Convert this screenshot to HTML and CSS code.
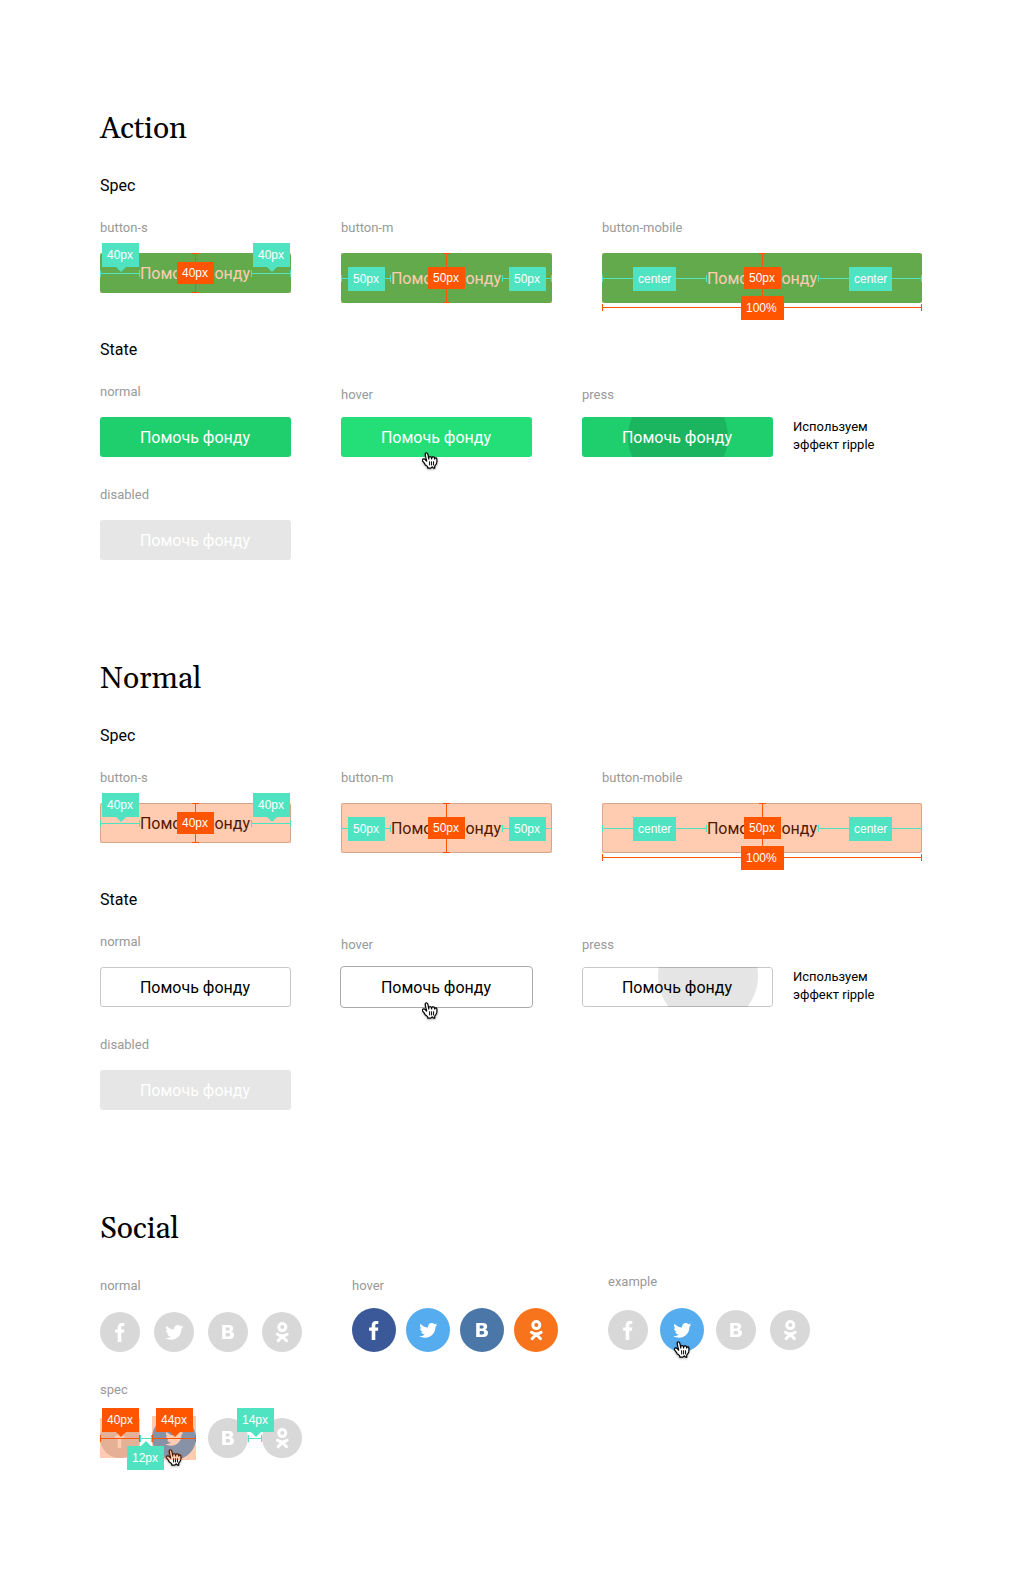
FILE: index.html
```html
<!DOCTYPE html>
<html lang="ru">
<head>
<meta charset="utf-8">
<title>Buttons</title>
<link rel="stylesheet" href="styles.css">
</head>
<body>
<svg class="sprite" aria-hidden="true">
  <symbol id="i-fb" viewBox="0 0 40 40"><path d="M17.7 30v-9.300h-2.600v-3.100h2.600v-2.100c0-2.900 1.600-4.500 4.200-4.500h2.400v3.100h-1.500c-1.200 0-1.500.5-1.500 1.500v2h3l-.35 3.100h-2.650V30z"/></symbol>
  <symbol id="i-tw" viewBox="0 0 40 40"><path transform="translate(11.300 11.350) scale(.75)" d="M23.954 4.569c-.885.389-1.830.654-2.825.775 1.014-.611 1.794-1.574 2.163-2.723-.951.555-2.005.959-3.127 1.184-.896-.959-2.173-1.559-3.591-1.559-2.717 0-4.920 2.203-4.920 4.917 0 .39.045.765.127 1.124C7.691 8.094 4.066 6.130 1.640 3.161c-.427.722-.666 1.561-.666 2.475 0 1.710.87 3.213 2.188 4.096-.807-.026-1.566-.248-2.228-.616v.061c0 2.385 1.693 4.374 3.946 4.827-.413.111-.849.171-1.296.171-.314 0-.615-.03-.916-.086.631 1.953 2.445 3.377 4.604 3.417-1.680 1.319-3.809 2.105-6.102 2.105-.39 0-.779-.023-1.170-.067 2.189 1.394 4.768 2.209 7.557 2.209 9.054 0 13.999-7.496 13.999-13.986 0-.209 0-.42-.015-.63.961-.689 1.800-1.560 2.460-2.548z"/></symbol>
  <symbol id="i-vk" viewBox="0 0 40 40"><path fill-rule="evenodd" d="M14.200 13h6.800c2.800 0 4.200 1.400 4.200 3.500 0 1.500-.8 2.600-2.100 3.100 1.800.3 2.900 1.600 2.900 3.300 0 2.600-1.800 4.100-4.700 4.100h-7.100zM17.700 15.600v3h2.200c1.100 0 1.700-.5 1.700-1.500s-.6-1.500-1.700-1.500zM17.700 21v3.400h2.600c1.300 0 1.900-.6 1.900-1.700s-.7-1.700-2-1.700z"/></symbol>
  <symbol id="i-ok" viewBox="0 0 40 40"><g fill="none" stroke="currentColor" stroke-width="3" stroke-linecap="round"><circle cx="20.300" cy="15.100" r="3.500"/><path d="M15.400 22.300c3 2 6.800 2 9.800 0M20.300 24.200l-4.200 4.500M20.300 24.200l4.200 4.500"/></g></symbol>
  <symbol id="i-hand" viewBox="8 7.500 16 18"><path fill="#fff" stroke="#000" stroke-width="1.200" stroke-linejoin="round" d="M11.300 20.400c-.3-.4-.6-1.100-1.200-2-.3-.5-1.200-1.500-1.500-1.900-.2-.4-.2-.6-.1-1 .1-.6.7-1.100 1.400-1.100.5 0 1 .4 1.400.7.2.2.5.6.7.8.2.2.2.3.4.5.2.3.3.5.2.1-.1-.5-.2-1.300-.4-2.100-.1-.6-.2-.7-.3-1.100-.1-.5-.2-.8-.3-1.300-.1-.3-.2-1.100-.3-1.500-.1-.5-.1-1.400.3-1.800.3-.3.9-.4 1.300-.2.5.3.8 1 .9 1.300.2.5.4 1.200.5 2 .2 1 .5 2.500.5 2.800 0-.4-.1-1.100 0-1.500.1-.3.3-.7.7-.8.3-.1.6-.1.9-.1.3.1.6.3.8.5.4.6.4 1.900.4 1.800.1-.4.1-1.200.3-1.600.1-.2.500-.4.7-.5.3-.1.7-.1 1 0 .2 0 .6.3.7.5.2.3.3 1.300.4 1.700 0 .1.100-.4.3-.7.4-.6 1.800-.8 1.900.6v2.300c0 .4-.1 1.300-.2 1.700-.1.3-.4 1-.7 1.400 0 0-1.100 1.200-1.200 1.800-.1.6-.1.6-.1 1s.1.900.1.900-.8.100-1.200 0c-.4-.1-.9-.8-1-1.100-.2-.3-.5-.3-.7 0-.2.400-.7 1.100-1.100 1.100-.7.1-2.100 0-3.100 0 0 0 .2-1-.2-1.400-.3-.3-.8-.8-1.100-1.100z"/><path stroke="#000" stroke-width="1" stroke-linecap="round" d="M15.600 17.200l.05 3.300M17.600 17.200v3.300M19.600 17.200v3.300"/></symbol>
</svg>

<main class="page">
  <section class="section">
    <h2>Action</h2>
    <h3>Spec</h3>
    <div class="row">
      <div class="cell">
        <p class="label">button-s</p>
        <div class="btn action spec">Помочь фонду
          <i class="ruler left w40"><b class="tag up point">40px</b></i>
          <i class="ruler right w40"><b class="tag up point">40px</b></i>
          <i class="ruler vertical"><b class="tag">40px</b></i>
        </div>
      </div>
      <div class="cell">
        <p class="label">button-m</p>
        <div class="btn medium action spec">Помочь фонду
          <i class="ruler left w50"><b class="tag">50px</b></i>
          <i class="ruler right w50"><b class="tag">50px</b></i>
          <i class="ruler vertical"><b class="tag">50px</b></i>
        </div>
      </div>
      <div class="cell">
        <p class="label">button-mobile</p>
        <div class="btn mobile action spec">Помочь фонду
          <i class="ruler left w105"><b class="tag wide">center</b></i>
          <i class="ruler right w104"><b class="tag wide">center</b></i>
          <i class="ruler vertical"><b class="tag">50px</b></i>
          <i class="ruler full"><b class="tag wide">100%</b></i>
        </div>
      </div>
    </div>
    <h3 class="state">State</h3>
    <div class="row states">
      <div class="cell first">
        <p class="label">normal</p>
        <div class="btn action">Помочь фонду</div>
      </div>
      <div class="cell">
        <p class="label">hover</p>
        <div class="btn action hover">Помочь фонду<svg class="hand"><use href="#i-hand"/></svg></div>
      </div>
      <div class="cell">
        <p class="label">press</p>
        <div class="btn action press"><span>Помочь фонду</span></div>
      </div>
      <p class="note">Используем<br>эффект ripple</p>
    </div>
    <div class="cell disabled-cell">
      <p class="label">disabled</p>
      <div class="btn disabled">Помочь фонду</div>
    </div>
  </section>

  <section class="section">
    <h2>Normal</h2>
    <h3>Spec</h3>
    <div class="row">
      <div class="cell">
        <p class="label">button-s</p>
        <div class="btn plain spec">Помочь фонду
          <i class="ruler left w40"><b class="tag up point">40px</b></i>
          <i class="ruler right w40"><b class="tag up point">40px</b></i>
          <i class="ruler vertical"><b class="tag">40px</b></i>
        </div>
      </div>
      <div class="cell">
        <p class="label">button-m</p>
        <div class="btn medium plain spec">Помочь фонду
          <i class="ruler left w50"><b class="tag">50px</b></i>
          <i class="ruler right w50"><b class="tag">50px</b></i>
          <i class="ruler vertical"><b class="tag">50px</b></i>
        </div>
      </div>
      <div class="cell">
        <p class="label">button-mobile</p>
        <div class="btn mobile plain spec">Помочь фонду
          <i class="ruler left w105"><b class="tag wide">center</b></i>
          <i class="ruler right w104"><b class="tag wide">center</b></i>
          <i class="ruler vertical"><b class="tag">50px</b></i>
          <i class="ruler full"><b class="tag wide">100%</b></i>
        </div>
      </div>
    </div>
    <h3 class="state">State</h3>
    <div class="row states">
      <div class="cell first">
        <p class="label">normal</p>
        <div class="btn plain">Помочь фонду</div>
      </div>
      <div class="cell">
        <p class="label">hover</p>
        <div class="btn plain hover">Помочь фонду<svg class="hand"><use href="#i-hand"/></svg></div>
      </div>
      <div class="cell">
        <p class="label">press</p>
        <div class="btn plain press"><span>Помочь фонду</span></div>
      </div>
      <p class="note">Используем<br>эффект ripple</p>
    </div>
    <div class="cell disabled-cell">
      <p class="label">disabled</p>
      <div class="btn disabled">Помочь фонду</div>
    </div>
  </section>

  <section class="section">
    <h2>Social</h2>
    <div class="social">
      <div class="set">
        <p class="label">normal</p>
        <div class="icons">
          <span class="ico"><svg><use href="#i-fb"/></svg></span>
          <span class="ico"><svg><use href="#i-tw"/></svg></span>
          <span class="ico"><svg><use href="#i-vk"/></svg></span>
          <span class="ico"><svg><use href="#i-ok"/></svg></span>
        </div>
      </div>
      <div class="set hovered">
        <p class="label">hover</p>
        <div class="icons">
          <span class="ico on fb"><svg><use href="#i-fb"/></svg></span>
          <span class="ico on tw"><svg><use href="#i-tw"/></svg></span>
          <span class="ico on vk"><svg><use href="#i-vk"/></svg></span>
          <span class="ico on ok"><svg><use href="#i-ok"/></svg></span>
        </div>
      </div>
      <div class="set example">
        <p class="label">example</p>
        <div class="icons">
          <span class="ico"><svg><use href="#i-fb"/></svg></span>
          <span class="ico on tw"><svg><use href="#i-tw"/></svg><svg class="hand"><use href="#i-hand"/></svg></span>
          <span class="ico"><svg><use href="#i-vk"/></svg></span>
          <span class="ico"><svg><use href="#i-ok"/></svg></span>
        </div>
      </div>
    </div>
    <div class="set spec-set">
      <p class="label">spec</p>
      <div class="icons">
        <span class="ico marked"><svg><use href="#i-fb"/></svg><i class="ruler size"><b class="tag up point">40px</b></i></span>
        <span class="ico on tw marked"><svg><use href="#i-tw"/></svg><i class="ruler size"><b class="tag up point">44px</b></i><i class="ruler gap12"><b class="tag down point">12px</b></i><svg class="hand"><use href="#i-hand"/></svg></span>
        <span class="ico"><svg><use href="#i-vk"/></svg><i class="ruler gap14"><b class="tag up point">14px</b></i></span>
        <span class="ico"><svg><use href="#i-ok"/></svg></span>
      </div>
    </div>
  </section>
</main>
</body>
</html>
```
FILE: styles.css
```css
* { box-sizing: border-box; }
body { margin: 0; background: #fff; color: #000; font-family: Roboto, "Liberation Sans", sans-serif; }
h2, h3, p { margin: 0; font-weight: 400; }
.sprite { position: absolute; width: 0; height: 0; }

.page { width: 1024px; height: 1570px; padding: 109px 0 0 100px; overflow: hidden; }
.section { height: 550px; }
h2 { font: 400 30px/40px Georgia, Gelasio, "Liberation Serif", serif; }
h3 { margin-top: 27px; font-size: 16px; line-height: 20px; }
h3.state { margin-top: 37px; }
.label { margin-bottom: 17px; color: #999; font-size: 13px; line-height: 16px; }
.row { display: flex; gap: 50px; margin-top: 24px; }
.states { align-items: flex-end; }
.states .label { margin-bottom: 14px; }
.states .first .label { margin-bottom: 17px; }
.note { align-self: flex-end; margin: 0 0 3px -30px; font-size: 13px; line-height: 18px; }
.disabled-cell { margin-top: 30px; }

.btn { position: relative; display: flex; align-items: center; justify-content: center; width: 191px; height: 40px; padding: 1px 1px 0 0; border-radius: 3px; font-size: 16px; line-height: 21px; white-space: nowrap; }
.btn.medium { width: 211px; height: 50px; }
.btn.mobile { width: 320px; height: 50px; padding-right: 0; }
.action { background: #1fcf6d; color: #fff; }
.action.hover { background: #24df78; }
.plain::before { content: ""; position: absolute; inset: 0; border: 1px solid #c8c8c8; border-radius: 3px; }
.plain.hover::before { inset: -1px; border-color: #aaa; border-radius: 4px; }
.disabled { background: #e6e6e6; color: #fff; }
.spec::after, .marked::after { content: ""; position: absolute; inset: 0; background: rgba(255, 85, 0, .3); }
.press { overflow: hidden; }
.press span { position: relative; z-index: 1; }
.press::after { content: ""; position: absolute; left: 46px; top: -30px; width: 100px; height: 100px; border-radius: 50%; background: rgba(0, 0, 0, .12); }
.plain.press::after { left: 76px; top: -41px; background: rgba(0, 0, 0, .1); }
.hand { position: absolute; z-index: 4; left: 81px; top: 35px; width: 16px; height: 18px; filter: drop-shadow(0 1px 1px rgba(0, 0, 0, .3)); }

/* dimension lines */
.ruler { position: absolute; z-index: 2; top: 17px; height: 7px; color: #50e3c2; border: solid; border-width: 0 1px; background: linear-gradient(currentColor, currentColor) 0 3px / 100% 1px no-repeat; font-style: normal; }
.medium .ruler, .mobile .ruler { top: 22px; }
.left { left: 0; }
.right { right: 0; }
.w40 { width: 40px; }
.w50 { width: 50px; }
.w104 { width: 104px; }
.w105 { width: 105px; }
.tag { position: absolute; left: 50%; top: 50%; margin: -11.5px 0 0 -18px; padding-left: 5px; width: 37px; height: 24px; background: currentColor; font: 400 12px/24px "Helvetica Neue", Helvetica, "Liberation Sans", sans-serif; }
.tag::first-line { color: #fff; }
.tag.wide { width: 43px; margin-left: -21px; }
.w105 .tag.wide { margin-left: -21.5px; }
.tag.up { top: -27px; margin-top: 0; }
.tag.down { top: 11px; margin: 0 0 0 -19px; }
.point::after { content: ""; position: absolute; left: 50%; top: 100%; margin-left: -4.5px; border: 5px solid transparent; border-bottom-width: 0; border-top-color: #50e3c2; }
.down.point::after { top: -5px; border-width: 0 5px 5px; border-bottom-color: #50e3c2; }
.ruler.vertical, .ruler.full, .ruler.size { color: #f50; }
.ruler.vertical { z-index: 3; top: 0; bottom: 0; left: 92px; width: 7px; height: auto; border-width: 1px 0; background: linear-gradient(currentColor, currentColor) 3px 0 / 1px 100% no-repeat; }
.medium .ruler.vertical { top: 0; left: 102px; }
.mobile .ruler.vertical { top: 0; left: 157px; }
.vertical .tag { margin: -11px 0 0 -18.5px; height: 22px; line-height: 22px; }
.ruler.full { z-index: 3; top: 51px; left: 0; right: 0; }
.size .point::after { border-top-color: #f50; }

/* social buttons */
.social { display: flex; height: 112px; margin-top: 21px; }
.social .label { margin-top: 8px; }
.set .icons { display: flex; align-items: center; gap: 14px; height: 44px; }
.set .label { margin-bottom: 16px; }
.hovered { margin-left: 50px; }
.set.hovered .label { margin-bottom: 14px; }
.set.hovered .icons { gap: 10px; }
.example { margin-left: 50px; }
.social .example .label { margin: 4px 0 18px; }
.spec-set .label { margin-bottom: 18px; }
.ico { position: relative; display: grid; place-items: center; width: 40px; height: 40px; border-radius: 50%; background: #d8d8d8; color: #fff; fill: #fff; }
.ico > svg:first-child { width: 40px; height: 40px; }
.ico.on { width: 44px; height: 44px; }
.ico.fb { background: #3b5998; }
.ico.tw { background: #55acee; }
.ico.vk { background: #4a76a8; }
.ico.ok { background: #f7731c; }
.example .tw, .spec-set .tw { margin: 0 -2px; }
.ico .hand { left: 14px; top: 33px; }
.spec-set .hand { z-index: 0; }
.ruler.size { left: 0; right: 0; }
.on .ruler.size { top: 19px; }
.on .ruler.gap12 { top: 19px; left: -12px; width: 12px; }
.ruler.gap14 { left: 40px; width: 14px; }
```
